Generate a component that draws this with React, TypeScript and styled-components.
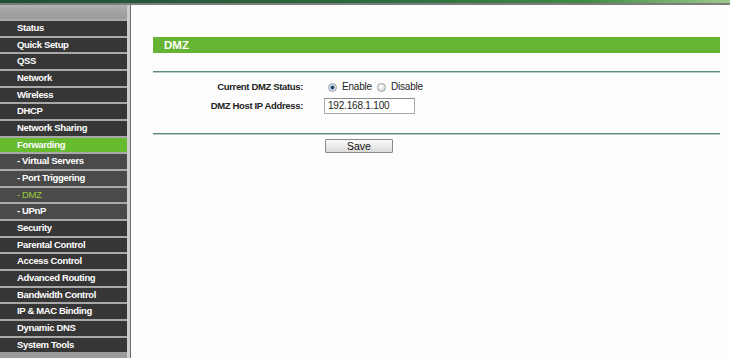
import React, { useState } from 'react';
import styled, { createGlobalStyle } from 'styled-components';

const GlobalStyle = createGlobalStyle`
  html, body {
    margin: 0;
    padding: 0;
    background: #fdfdfd;
    font-family: "Liberation Sans", Arial, sans-serif;
  }
`;

const Page = styled.div`
  width: 730px;
  height: 358px;
  overflow: hidden;
  display: flex;
  flex-direction: column;
`;

const TopStrip = styled.div`
  height: 3px;
  background: linear-gradient(90deg, #1f4f34 0%, #2d6a40 50%, #3f8a45 80%, #9cc98a 100%);
  border-bottom: 2px solid #7d7d7d;
`;

const Body = styled.div`
  flex: 1;
  display: flex;
  min-height: 0;
`;

const Sidebar = styled.nav`
  width: 127px;
  border-right: 3px solid #cdcdcd;
  box-shadow: 1px 0 0 #6a6a6a;
  display: flex;
  flex-direction: column;
  padding-top: 14px;
  background: linear-gradient(180deg, #b2b2b2 0px, #a3a3a3 6px, #9b9b9b 14px);
`;

const MenuItem = styled.div<{ $sub?: boolean; $active?: boolean; $current?: boolean }>`
  height: 14.68px;
  border-top: 2px solid #a9a9a9;
  background: ${p => (p.$active ? '#66bb2f' : p.$sub ? '#4a4a4a' : '#363636')};
  color: ${p => (p.$current ? '#9ccc3c' : '#ffffff')};
  font-size: 9.5px;
  letter-spacing: -0.35px;
  font-weight: ${p => (p.$current ? 'normal' : 'bold')};
  line-height: 14.68px;
  padding-left: 17px;
  white-space: nowrap;
`;

const Main = styled.main`
  flex: 1;
  margin-left: 1px;
  padding: 32px 10px 0 22px;
  background: #fdfdfd;
`;

const TitleBar = styled.div`
  height: 16px;
  margin-bottom: 18px;
  background: #66b433;
  color: #ffffff;
  font-size: 11.5px;
  font-weight: bold;
  line-height: 16px;
  padding-left: 11px;
`;

const Divider = styled.div`
  height: 1px;
  background: #5d8a72;
  border-bottom: 1px solid #b8cdbf;
`;

const Form = styled.div`
  display: grid;
  grid-template-columns: 150px 1fr;
  column-gap: 21px;
  grid-auto-rows: 19px;
  align-items: center;
  padding: 4px 0 18px;
`;

const Label = styled.div`
  text-align: right;
  font-size: 9.5px;
  letter-spacing: -0.35px;
  font-weight: bold;
  color: #222;
`;

const Value = styled.div`
  display: flex;
  align-items: center;
  font-size: 10px;
  letter-spacing: -0.2px;
  color: #222;
`;

const Radio = styled.input`
  appearance: none;
  width: 9px;
  height: 9px;
  margin: 1px 5px 0 4px;
  border-radius: 50%;
  border: 1px solid #9aa3ab;
  background: radial-gradient(circle at 40% 35%, #ffffff 0%, #dcdcdc 70%, #c4c4c4 100%);
  &:checked {
    background: radial-gradient(circle at 50% 50%, #1b3550 0%, #2c5478 35%, #c9d6e2 45%, #eef2f5 100%);
  }
`;

const RadioText = styled.span`
  margin-right: 1px;
`;

const IpInput = styled.input`
  width: 83px;
  height: 14px;
  margin: 0;
  padding: 0 3px;
  border: 1px solid #a8a8a8;
  border-top-color: #8c8c8c;
  font-family: "Liberation Sans", Arial, sans-serif;
  font-size: 10px;
  letter-spacing: -0.2px;
  color: #222;
  background: #fff;
  outline: none;
`;

const Actions = styled.div`
  padding: 1px 0 0 172px;
`;

const SaveButton = styled.button`
  width: 68px;
  height: 14px;
  padding: 0;
  border: 1px solid #8a8a8a;
  border-radius: 1px;
  background: linear-gradient(180deg, #fafafa 0%, #ececec 50%, #dadada 100%);
  font-family: "Liberation Sans", Arial, sans-serif;
  font-size: 10.5px;
  line-height: 12px;
  color: #111;
`;

const menu: { label: string; sub?: boolean; active?: boolean; current?: boolean }[] = [
  { label: 'Status' },
  { label: 'Quick Setup' },
  { label: 'QSS' },
  { label: 'Network' },
  { label: 'Wireless' },
  { label: 'DHCP' },
  { label: 'Network Sharing' },
  { label: 'Forwarding', active: true },
  { label: '- Virtual Servers', sub: true },
  { label: '- Port Triggering', sub: true },
  { label: '- DMZ', sub: true, current: true },
  { label: '- UPnP', sub: true },
  { label: 'Security' },
  { label: 'Parental Control' },
  { label: 'Access Control' },
  { label: 'Advanced Routing' },
  { label: 'Bandwidth Control' },
  { label: 'IP & MAC Binding' },
  { label: 'Dynamic DNS' },
  { label: 'System Tools' },
];

export default function App() {
  const [enabled, setEnabled] = useState(true);
  const [ip, setIp] = useState('192.168.1.100');

  return (
    <Page>
      <GlobalStyle />
      <TopStrip />
      <Body>
        <Sidebar>
          {menu.map(item => (
            <MenuItem key={item.label} $sub={item.sub} $active={item.active} $current={item.current}>
              {item.label}
            </MenuItem>
          ))}
        </Sidebar>
        <Main>
          <TitleBar>DMZ</TitleBar>
          <Divider />
          <Form>
            <Label>Current DMZ Status:</Label>
            <Value>
              <Radio type="radio" name="dmz" checked={enabled} onChange={() => setEnabled(true)} />
              <RadioText>Enable</RadioText>
              <Radio type="radio" name="dmz" checked={!enabled} onChange={() => setEnabled(false)} />
              <RadioText>Disable</RadioText>
            </Value>
            <Label>DMZ Host IP Address:</Label>
            <Value>
              <IpInput value={ip} onChange={e => setIp(e.target.value)} />
            </Value>
          </Form>
          <Divider />
          <Actions>
            <SaveButton>Save</SaveButton>
          </Actions>
        </Main>
      </Body>
    </Page>
  );
}
